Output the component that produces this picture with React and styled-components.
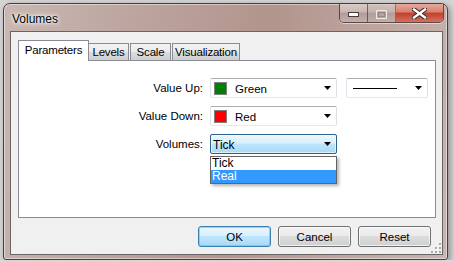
import styled, { createGlobalStyle } from "styled-components";

const GlobalStyle = createGlobalStyle`
  html, body {
    margin: 0;
    padding: 0;
    background: #d6d6d6;
  }
  body {
    padding: 3px 0 0 3px;
    font-family: "Liberation Sans", Arial, sans-serif;
  }
`;

const Arrow = () => (
  <svg width="7" height="4" viewBox="0 0 7 4">
    <path d="M0 0h7L3.5 4z" fill="#000" />
  </svg>
);

const App = () => {
  return <>
    <GlobalStyle />
    <Window>
      <TitleBar>
        <Title>Volumes</Title>
        <CaptionGroup>
          <CaptionButton $w={28}>
            <svg width="11" height="5" viewBox="0 0 11 5">
              <rect x="0.5" y="0.5" width="10" height="4" fill="#fff" stroke="#4a3b38" />
            </svg>
          </CaptionButton>
          <CaptionButton $w={28} $dim>
            <svg width="11" height="9" viewBox="0 0 11 9">
              <rect x="0.5" y="0.5" width="10" height="8" fill="none" stroke="#fff" />
              <rect x="2.5" y="2.5" width="6" height="4" fill="none" stroke="#8f7d79" />
            </svg>
          </CaptionButton>
          <CloseButton>
            <svg width="15" height="11" viewBox="0 0 15 11">
              <path d="M2 1.5l11 8M13 1.5l-11 8" stroke="#3d2a28" strokeWidth="4.5" strokeLinecap="square" />
              <path d="M2 1.5l11 8M13 1.5l-11 8" stroke="#fff" strokeWidth="2.4" strokeLinecap="square" />
            </svg>
          </CloseButton>
        </CaptionGroup>
      </TitleBar>
      <Client>
        <Tabs>
          <Tab $active $w={71}>Parameters</Tab>
          <Tab $w={41}>Levels</Tab>
          <Tab $w={41}>Scale</Tab>
          <Tab $w={68}>Visualization</Tab>
        </Tabs>
        <Panel>
          <Form>
            <Label>Value Up:</Label>
            <Combo>
              <Swatch $color="#008000" />
              <ComboText>Green</ComboText>
              <Arrow />
            </Combo>
            <Combo $w={82}>
              <LineSample />
              <Arrow />
            </Combo>

            <Label>Value Down:</Label>
            <Combo>
              <Swatch $color="#ff0000" />
              <ComboText>Red</ComboText>
              <Arrow />
            </Combo>
            <span />

            <Label>Volumes:</Label>
            <DropHolder>
              <DropButton>
                <DropText>Tick</DropText>
                <Arrow />
              </DropButton>
              <DropList>
                <DropItem>Tick</DropItem>
                <DropItem $selected>Real</DropItem>
              </DropList>
            </DropHolder>
            <span />
          </Form>
        </Panel>
        <Buttons>
          <Button $default>OK</Button>
          <Button>Cancel</Button>
          <Button>Reset</Button>
        </Buttons>
        <Grip>
          <svg width="10" height="10" viewBox="0 0 10 10">
            {[[8, 0], [8, 4], [4, 4], [8, 8], [4, 8], [0, 8]].map(([x, y], i) => (
              <g key={i}>
                <rect x={x + 1} y={y + 1} width="2" height="2" fill="#fff" />
                <rect x={x} y={y} width="2" height="2" fill="#a8a8a8" />
              </g>
            ))}
          </svg>
        </Grip>
      </Client>
    </Window>
  </>;
};

export default App;

const Window = styled.div`
  box-sizing: border-box;
  width: 445px;
  height: 257px;
  border: 1px solid #4b3d3a;
  border-radius: 7px 7px 3px 3px;
  background: linear-gradient(100deg, #c9b7b2 0%, #bba39d 30%, #b2958d 55%, #bfa7a1 80%, #c7b5b0 100%);
  box-shadow: inset 0 0 0 1px rgba(255, 255, 255, 0.45), 2px 2px 6px rgba(0, 0, 0, 0.35);
  display: flex;
  flex-direction: column;
  position: relative;
`;

const TitleBar = styled.div`
  height: 27px;
  display: flex;
  align-items: flex-start;
  justify-content: space-between;
  padding: 0 3px 0 8px;
`;

const Title = styled.div`
  font-size: 12px;
  color: #000;
  margin-top: 8px;
  text-shadow: 0 0 6px #fff, 0 0 4px #fff, 0 0 2px rgba(255, 255, 255, 0.8);
`;

const CaptionGroup = styled.div`
  display: flex;
  height: 18px;
  border: 1px solid rgba(60, 40, 38, 0.75);
  border-top: none;
  border-radius: 0 0 5px 5px;
  overflow: hidden;
  box-shadow: 0 1px 0 rgba(255, 255, 255, 0.5);
`;

const CaptionButton = styled.div`
  width: ${p => p.$w}px;
  display: flex;
  align-items: center;
  justify-content: center;
  border-right: 1px solid rgba(60, 40, 38, 0.6);
  background: linear-gradient(#d9cbc8 0%, #c9b6b2 45%, #b09c98 50%, #c1b1ae 100%);
  padding-top: 2px;
  opacity: ${p => (p.$dim ? 0.75 : 1)};
  box-sizing: border-box;
`;

const CloseButton = styled.div`
  width: 47px;
  display: flex;
  align-items: center;
  justify-content: center;
  background: linear-gradient(#e6a89e 0%, #d8806f 45%, #c3402b 50%, #d4705e 100%);
  padding-top: 1px;
`;

const Client = styled.div`
  box-sizing: border-box;
  margin: 0 4px 4px 6px;
  flex: 1;
  border: 1px solid #6c6462;
  background: #f0f0f0;
  padding: 8px 6px 0 7px;
  display: flex;
  flex-direction: column;
  position: relative;
`;

const Tabs = styled.div`
  display: flex;
  align-items: flex-end;
  height: 21px;
  margin-bottom: -1px;
  position: relative;
  z-index: 1;
`;

const Tab = styled.div`
  box-sizing: border-box;
  width: ${p => p.$w}px;
  height: ${p => (p.$active ? 21 : 18)}px;
  border: 1px solid #898c95;
  border-bottom: ${p => (p.$active ? "none" : "1px solid #898c95")};
  margin-left: ${p => (p.$active ? 0 : -1)}px;
  margin-right: ${p => (p.$active ? 0 : 2)}px;
  background: ${p => (p.$active ? "#fff" : "linear-gradient(#f2f2f2 0%, #ebebeb 50%, #dddddd 51%, #cfcfcf 100%)")};
  font-size: 11.5px;
  letter-spacing: -0.2px;
  color: #000;
  display: flex;
  align-items: center;
  justify-content: center;
  padding-bottom: ${p => (p.$active ? 2 : 0)}px;
`;

const Panel = styled.div`
  box-sizing: border-box;
  height: 158px;
  border: 1px solid #898c95;
  background: #fff;
  padding-top: 17px;
`;

const Form = styled.div`
  display: grid;
  grid-template-columns: 184px 127px 82px;
  grid-auto-rows: 20px;
  column-gap: 8px;
  row-gap: 8px;
  & > :nth-child(3n + 2) {
    margin-left: -1px;
  }
`;

const Label = styled.div`
  font-size: 11.5px;
  color: #000;
  text-align: right;
  line-height: 20px;
`;

const Combo = styled.div`
  box-sizing: border-box;
  width: ${p => p.$w || 127}px;
  height: 20px;
  border: 1px solid #abadb3;
  border-color: #abadb3 #dbdfe6 #e3e9ef #e2e3ea;
  border-radius: 2px;
  background: #fff;
  display: flex;
  align-items: center;
  padding: 0 5px 0 3px;
  gap: 8px;
`;

const Swatch = styled.div`
  box-sizing: border-box;
  width: 13px;
  height: 13px;
  background: ${p => p.$color};
  border: 1px solid #808080;
  flex: none;
`;

const ComboText = styled.span`
  flex: 1;
  font-size: 11.5px;
  padding-top: 1px;
`;

const LineSample = styled.div`
  flex: 1;
  height: 1px;
  background: #000;
  margin: 0 10px 0 3px;
`;

const DropHolder = styled.div`
  position: relative;
  margin-left: -1px;
`;

const DropButton = styled.div`
  box-sizing: border-box;
  width: 127px;
  height: 20px;
  border: 1px solid #2c628b;
  border-radius: 2px;
  background: linear-gradient(#eaf6fd 0%, #d9f0fc 45%, #bee6fd 50%, #a7d9f5 100%);
  box-shadow: inset 0 0 0 1px rgba(255, 255, 255, 0.6);
  display: flex;
  align-items: center;
  padding: 0 5px 0 2px;
`;

const DropText = styled.span`
  flex: 1;
  font-size: 12px;
  padding-top: 1px;
`;

const DropList = styled.div`
  position: absolute;
  top: 22px;
  left: 0;
  box-sizing: border-box;
  width: 127px;
  border: 1px solid #646464;
  background: #fff;
  box-shadow: 2px 2px 3px rgba(0, 0, 0, 0.3);
  z-index: 2;
`;

const DropItem = styled.div`
  height: 13px;
  line-height: 13px;
  font-size: 12px;
  padding-left: 1px;
  color: ${p => (p.$selected ? "#fff" : "#000")};
  background: ${p => (p.$selected ? "#3399ff" : "transparent")};
`;

const Buttons = styled.div`
  display: flex;
  justify-content: flex-end;
  gap: 7px;
  margin-top: 8px;
  padding-right: 5px;
`;

const Button = styled.div`
  box-sizing: border-box;
  width: 73px;
  height: 21px;
  border: 1px solid ${p => (p.$default ? "#3c7fb1" : "#707070")};
  border-radius: 3px;
  background: ${p => (p.$default
    ? "linear-gradient(#eaf6fd 0%, #d9f0fc 45%, #bee6fd 50%, #a7d9f5 100%)"
    : "linear-gradient(#f2f2f2 0%, #ebebeb 45%, #dddddd 50%, #cfcfcf 100%)")};
  box-shadow: inset 0 0 0 1px ${p => (p.$default ? "rgba(72, 200, 240, 0.6)" : "rgba(255, 255, 255, 0.7)")};
  font-size: 11.5px;
  display: flex;
  align-items: center;
  justify-content: center;
`;

const Grip = styled.div`
  position: absolute;
  right: 1px;
  bottom: 1px;
  line-height: 0;
`;
